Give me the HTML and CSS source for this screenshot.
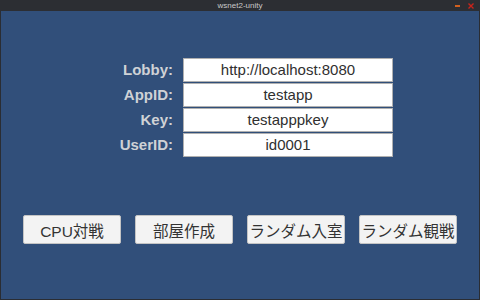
FILE: index.html
```html
<!DOCTYPE html>
<html lang="ja">
<head>
<meta charset="UTF-8">
<meta name="viewport" content="width=device-width, initial-scale=1.0">
<title>wsnet2-unity</title>
<link rel="stylesheet" href="styles.css">
</head>
<body>

<div class="window">
    <div class="titlebar">
        <span class="title">wsnet2-unity</span>
        <div class="controls">
            <span class="min"></span>
            <svg class="close" width="6" height="6" viewBox="0 0 6 6">
                <path d="M0.5 0.5 L5.5 5.5 M5.5 0.5 L0.5 5.5" stroke="#c8241c" stroke-width="1.4"/>
            </svg>
        </div>
    </div>
    <div class="content">
        <div class="form">
            <div class="label">Lobby:</div>
            <div class="field">http://localhost:8080</div>
            <div class="label">AppID:</div>
            <div class="field">testapp</div>
            <div class="label">Key:</div>
            <div class="field">testapppkey</div>
            <div class="label">UserID:</div>
            <div class="field">id0001</div>
        </div>
        <div class="buttons">
            <button>CPU対戦</button>
            <button>部屋作成</button>
            <button>ランダム入室</button>
            <button>ランダム観戦</button>
        </div>
    </div>
</div>

</body>
</html>
```

FILE: styles.css
```css
/* ウィンドウ全体 */
body {
    margin: 0;
    padding: 0;
    background-color: #2c2e33;
    font-family: "Liberation Sans", Arial, sans-serif;
}

.window {
    display: flex;
    flex-direction: column;
    width: 480px;
    height: 300px;
}

.titlebar {
    position: relative;
    height: 11px;
    background-color: #2c2e33;
    display: flex;
    justify-content: center;
    align-items: center;
}

.title {
    font-size: 8px;
    color: #c8c8c8;
    line-height: 11px;
}

.controls {
    position: absolute;
    right: 6px;
    top: 3px;
    display: flex;
    align-items: center;
    gap: 8px;
}

.min {
    width: 5px;
    height: 2px;
    background-color: #d2601e;
}

.content {
    flex: 1;
    background-color: #314f7a;
    border: 1px solid #2a2d33;
    border-top: none;
}

/* 入力欄 */
.form {
    display: grid;
    grid-template-columns: 172px 210px;
    grid-auto-rows: 24px;
    column-gap: 10px;
    row-gap: 1px;
    margin-top: 47px;
}

.label {
    text-align: right;
    font-size: 15px;
    font-weight: bold;
    color: #cfd2d6;
    line-height: 24px;
}

.field {
    background-color: #ffffff;
    border: 1px solid #b0b0b0;
    box-sizing: border-box;
    text-align: center;
    font-size: 15px;
    line-height: 22px;
    color: #303030;
}

/* ボタン */
.buttons {
    display: flex;
    justify-content: center;
    gap: 14px;
    margin-top: 58px;
}

.buttons button {
    width: 98px;
    height: 29px;
    padding: 0;
    background-color: #f3f3f3;
    border: 1px solid #c4c4c4;
    border-radius: 2px;
    font-family: "Liberation Sans", "Noto Sans CJK JP", sans-serif;
    font-size: 15.5px;
    color: #333333;
}
```
